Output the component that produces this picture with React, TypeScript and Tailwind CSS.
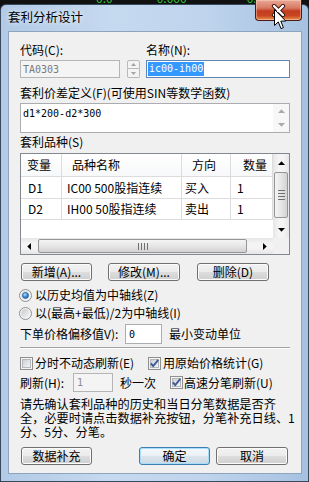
import React from "react";

const cjk = "font-['Noto_Sans_CJK_SC',sans-serif]";
const mono = "font-['DejaVu_Sans_Mono','Noto_Sans_CJK_SC',monospace]";

function Tri({ dir, c = "#000" }: { dir: "u" | "d" | "l" | "r"; c?: string }) {
  if (dir === "u")
    return (
      <svg width="7" height="4" viewBox="0 0 7 4">
        <path d="M0 4L3.5 0.3L7 4Z" fill={c} />
      </svg>
    );
  if (dir === "d")
    return (
      <svg width="7" height="4" viewBox="0 0 7 4">
        <path d="M0 0L3.5 3.7L7 0Z" fill={c} />
      </svg>
    );
  if (dir === "l")
    return (
      <svg width="4" height="7" viewBox="0 0 4 7">
        <path d="M4 0L0.3 3.5L4 7Z" fill={c} />
      </svg>
    );
  return (
    <svg width="4" height="7" viewBox="0 0 4 7">
      <path d="M0 0L3.7 3.5L0 7Z" fill={c} />
    </svg>
  );
}

function Radio({ on }: { on?: boolean }) {
  return (
    <svg width="13" height="13" viewBox="0 0 13 13" className="shrink-0">
      <defs>
        <linearGradient id="rg" x1="0" y1="0" x2="1" y2="1">
          <stop offset="0" stopColor="#c4c8ce" />
          <stop offset="1" stopColor="#f9f9f9" />
        </linearGradient>
        <radialGradient id="rd" cx="0.4" cy="0.35" r="0.75">
          <stop offset="0" stopColor="#b5e3fd" />
          <stop offset="0.55" stopColor="#2f86d6" />
          <stop offset="1" stopColor="#174f8e" />
        </radialGradient>
      </defs>
      <circle cx="6.5" cy="6.5" r="6" fill="#f4f4f4" stroke="#8e8f8f" />
      <circle cx="6.5" cy="6.5" r="4.4" fill="url(#rg)" />
      {on && <circle cx="6.5" cy="6.5" r="3" fill="url(#rd)" stroke="#1d5a95" strokeWidth="0.6" />}
    </svg>
  );
}

function Check({ on }: { on?: boolean }) {
  return (
    <svg width="13" height="13" viewBox="0 0 13 13" className="shrink-0">
      <defs>
        <linearGradient id="cg" x1="0" y1="0" x2="1" y2="1">
          <stop offset="0" stopColor="#c9cdd3" />
          <stop offset="1" stopColor="#f7f7f7" />
        </linearGradient>
      </defs>
      <rect x="0.5" y="0.5" width="12" height="12" fill="#f4f4f4" stroke="#8e8f8f" />
      <rect x="2.5" y="2.5" width="8" height="8" fill="url(#cg)" stroke="#b4b8bd" />
      {on && <path d="M2.8 6.3L5.2 9L10.3 2.8" fill="none" stroke="#3f5a98" strokeWidth="1.9" />}
    </svg>
  );
}

const btnBase =
  "h-[18px] rounded-[3px] border flex items-center justify-center text-[12px] leading-none text-black shrink-0";
const btnGrey =
  "border-[#707070] bg-[linear-gradient(#f2f2f2_0%,#ebebeb_48%,#dddddd_52%,#cfcfcf_100%)] shadow-[inset_0_0_0_1px_#fcfcfc]";
const btnDef =
  "border-[#3c7fb1] bg-[linear-gradient(#f3f8fb_0%,#eaf1f6_48%,#dbe5ec_52%,#cdd9e3_100%)] shadow-[inset_0_0_0_1px_#a8dcf8]";

function VScroll() {
  return (
    <div className="w-[16px] h-[84px] flex flex-col bg-[linear-gradient(90deg,#e6e6e6,#f4f4f4_35%,#f4f4f4_65%,#e6e6e6)]">
      <div className="h-[17px] flex items-center justify-center">
        <Tri dir="u" />
      </div>
      <div className="mt-[1px] h-[46px] mx-[1px] rounded-[2px] border border-[#959595] bg-[linear-gradient(90deg,#f4f4f4,#e6e6e6_50%,#d2d2d2)] flex flex-col items-center justify-center gap-[2px]">
        <div className="w-[7px] h-[1px] bg-[#6f6f6f]" />
        <div className="w-[7px] h-[1px] bg-[#6f6f6f]" />
        <div className="w-[7px] h-[1px] bg-[#6f6f6f]" />
        <div className="w-[7px] h-[1px] bg-[#6f6f6f]" />
      </div>
      <div className="flex-1" />
      <div className="h-[17px] flex items-center justify-center">
        <Tri dir="d" />
      </div>
    </div>
  );
}

function HScroll() {
  return (
    <div className="w-[252px] h-[16px] flex items-center bg-[linear-gradient(#e6e6e6,#f4f4f4_35%,#f4f4f4_65%,#e6e6e6)]">
      <div className="w-[16px] h-full flex items-center justify-center">
        <Tri dir="l" />
      </div>
      <div className="ml-[1px] w-[209px] h-[14px] rounded-[2px] border border-[#959595] bg-[linear-gradient(#f4f4f4,#e6e6e6_50%,#d2d2d2)] flex items-center justify-center gap-[2px]">
        <div className="w-[1px] h-[7px] bg-[#6f6f6f]" />
        <div className="w-[1px] h-[7px] bg-[#6f6f6f]" />
        <div className="w-[1px] h-[7px] bg-[#6f6f6f]" />
        <div className="w-[1px] h-[7px] bg-[#6f6f6f]" />
      </div>
      <div className="flex-1" />
      <div className="w-[17px] h-full flex items-center justify-center">
        <Tri dir="r" />
      </div>
    </div>
  );
}

const cols = ["w-[41px]", "w-[120px]", "w-[49px]", "w-[42px]"];

function Row({ cells, pads, h }: { cells: string[]; pads: string[]; h: string }) {
  return (
    <div className={`flex ${h} border-b border-[#dcdcdc]`}>
      {cells.map((c, i) => (
        <div
          key={i}
          className={`${cols[i]} ${pads[i]} h-full flex items-center border-r border-[#dcdcdc] whitespace-nowrap overflow-hidden`}
        >
          {c}
        </div>
      ))}
    </div>
  );
}

export default function App() {
  return (
    <div className={`w-[309px] h-[482px] bg-[#111111] overflow-hidden relative ${cjk} text-[12px] text-black`}>
      {/* background app peeking above window */}
      <div className="h-[4px] overflow-hidden flex text-[#35c035] text-[12px] leading-[12px]">
        <span className="ml-[96px] -mt-[8px]">0.0</span>
        <span className="ml-[44px] -mt-[8px]">0.000</span>
        <span className="ml-[60px] -mt-[8px]">0.000</span>
      </div>

      {/* window frame */}
      <div className="h-[478px] rounded-t-[6px] border border-[#3a4a5e] bg-[linear-gradient(90deg,#b2cae6_0%,#c5d9ef_35%,#c0d5ed_65%,#a6c1e1_100%)] flex flex-col">
        <div className="h-[26px] flex items-center pl-[7px] pb-[1px]">
          <span className="text-[12.5px] leading-none [text-shadow:0_0_5px_#ffffff]">套利分析设计</span>
        </div>

        {/* client area */}
        <div className="ml-[7px] w-[294px] h-[443px] border border-[#8ea3bc] bg-[#f0f0f0] px-[11px] flex flex-col">
          {/* labels */}
          <div className="mt-[11px] h-[14px] flex leading-[14px]">
            <span className="w-[126px]">代码(C):</span>
            <span>名称(N):</span>
          </div>

          {/* inputs */}
          <div className="mt-[3px] h-[18px] flex">
            <div className={`w-[100px] h-full border border-[#b5b5b5] bg-[#f4f4f4] text-[#7a7a7a] ${mono} text-[10px] flex items-center pl-[2px]`}>
              TA0303
            </div>
            <div className="ml-[7px] w-[13px] h-full flex flex-col gap-[0px]">
              <div className="h-[9px] border border-[#b9b9b9] rounded-t-[2px] bg-[#f3f3f3] flex items-center justify-center">
                <svg width="5" height="3" viewBox="0 0 5 3">
                  <path d="M0 3L2.5 0L5 3Z" fill="#a3a3a3" />
                </svg>
              </div>
              <div className="h-[9px] border border-t-0 border-[#b9b9b9] rounded-b-[2px] bg-[#f3f3f3] flex items-center justify-center">
                <svg width="5" height="3" viewBox="0 0 5 3">
                  <path d="M0 0L2.5 3L5 0Z" fill="#a3a3a3" />
                </svg>
              </div>
            </div>
            <div className="ml-[6px] w-[144px] h-full border border-[#5d86b6] bg-white flex items-center pl-[1px]">
              <span className={`${mono} text-[10px] leading-[14px] bg-[#3399ff] text-white px-[1px]`}>ic00-ih00</span>
            </div>
          </div>

          {/* formula label */}
          <div className="mt-[8px] h-[14px] leading-[14px] whitespace-nowrap">套利价差定义(F)(可使用SIN等数学函数)</div>

          {/* formula textarea */}
          <div className="mt-[3px] h-[30px] border border-[#abadb3] bg-white flex">
            <div className={`flex-1 pl-[2px] pt-[3px] ${mono} text-[10px] leading-[14px]`}>d1*200-d2*300</div>
            <div className="w-[16px] h-full flex flex-col bg-[#f7f7f7]">
              <div className="flex-1 flex items-center justify-center">
                <Tri dir="u" c="#a9a9a9" />
              </div>
              <div className="flex-1 flex items-center justify-center">
                <Tri dir="d" c="#a9a9a9" />
              </div>
            </div>
          </div>

          {/* list label */}
          <div className="mt-[2px] h-[14px] leading-[14px]">套利品种(S)</div>

          {/* list view */}
          <div className="mt-[4px] h-[102px] border border-[#828790] bg-white flex flex-col">
            <div className="flex h-[84px]">
              <div className="w-[252px] flex flex-col">
                <div className="flex h-[23px] border-b border-[#dcdcdc] bg-[linear-gradient(#ffffff,#f7f8f9)]">
                  {["变量", "品种名称", "方向", "数量"].map((c, i) => (
                    <div
                      key={i}
                      className={`${cols[i]} ${["pl-[6px]", "pl-[10px]", "pl-[10px]", "pl-[12px]"][i]} h-full flex items-center border-r border-[#dcdcdc] whitespace-nowrap`}
                    >
                      {c}
                    </div>
                  ))}
                </div>
                <Row
                  h="h-[22px]"
                  cells={["D1", "IC00 500股指连续", "买入", "1"]}
                  pads={["pl-[7px]", "pl-[5px]", "pl-[3px]", "pl-[6px]"]}
                />
                <Row
                  h="h-[21px]"
                  cells={["D2", "IH00 50股指连续", "卖出", "1"]}
                  pads={["pl-[7px]", "pl-[5px]", "pl-[3px]", "pl-[6px]"]}
                />
              </div>
              <VScroll />
            </div>
            <div className="flex h-[16px]">
              <HScroll />
              <div className="w-[16px] h-full bg-[#f0f0f0]" />
            </div>
          </div>

          {/* action buttons */}
          <div className="mt-[8px] h-[18px] flex">
            <div className={`${btnBase} ${btnGrey} ml-[1px] w-[71px]`}>新增(A)...</div>
            <div className={`${btnBase} ${btnGrey} ml-[16px] w-[72px]`}>修改(M)...</div>
            <div className={`${btnBase} ${btnGrey} ml-[17px] w-[72px]`}>删除(D)</div>
          </div>

          {/* radios */}
          <div className="mt-[7px] h-[14px] flex items-center -ml-[1px]">
            <Radio on />
            <span className="ml-[3px] leading-[14px]">以历史均值为中轴线(Z)</span>
          </div>
          <div className="mt-[4px] h-[14px] flex items-center -ml-[1px]">
            <Radio />
            <span className="ml-[3px] leading-[14px]">以(最高+最低)/2为中轴线(I)</span>
          </div>

          {/* offset row */}
          <div className="mt-[4px] h-[20px] flex items-center">
            <span className="w-[105px] whitespace-nowrap">下单价格偏移值V):</span>
            <div className={`w-[37px] h-[20px] border border-[#abadb3] bg-white flex items-center pl-[3px] ${mono} text-[10px]`}>
              0
            </div>
            <span className="ml-[7px]">最小变动单位</span>
          </div>

          {/* separator */}
          <div className="mt-[3px] h-[2px] border-t border-[#a0a0a0] border-b border-b-white" />

          {/* checkbox row */}
          <div className="mt-[7px] h-[14px] flex items-center">
            <div className="w-[128px] flex items-center">
              <Check />
              <span className="ml-[2px] leading-[14px] whitespace-nowrap">分时不动态刷新(E)</span>
            </div>
            <Check on />
            <span className="ml-[2px] leading-[14px] whitespace-nowrap">用原始价格统计(G)</span>
          </div>

          {/* refresh row */}
          <div className="mt-[3px] h-[19px] flex items-center">
            <span className="w-[53px] whitespace-nowrap">刷新(H):</span>
            <div className={`w-[40px] h-[19px] border border-[#b5b5b5] bg-[#f4f4f4] text-[#8a8a8a] flex items-start pl-[3px] pt-[1px] ${mono} text-[10px]`}>
              1
            </div>
            <span className="ml-[7px] w-[36px] whitespace-nowrap">秒一次</span>
            <div className="ml-[14px] flex items-center">
              <Check on />
              <span className="ml-[1px] leading-[14px] whitespace-nowrap">高速分笔刷新(U)</span>
            </div>
          </div>

          {/* note */}
          <div className="mt-[5px] flex flex-col text-[12.2px] whitespace-nowrap">
            <div className="h-[14px] leading-[14px]">请先确认套利品种的历史和当日分笔数据是否齐</div>
            <div className="h-[14px] leading-[14px]">全，必要时请点击数据补充按钮，分笔补充日线、1</div>
            <div className="h-[14px] leading-[14px]">分、5分、分笔。</div>
          </div>

          {/* bottom buttons */}
          <div className="mt-[8px] h-[18px] flex">
            <div className={`${btnBase} ${btnGrey} ml-[1px] w-[71px] text-[12.5px]`}>数据补充</div>
            <div className={`${btnBase} ${btnDef} ml-[47px] w-[71px] text-[12.5px]`}>确定</div>
            <div className={`${btnBase} ${btnGrey} ml-[6px] w-[72px] text-[12.5px]`}>取消</div>
          </div>
        </div>
      </div>

      {/* close button (overlays top edge) */}
      <div className="absolute top-0 left-[255px] w-[47px] h-[21px] rounded-b-[4px] border border-t-0 border-[#4d1a11] bg-[linear-gradient(#e9a896_0%,#d77a62_40%,#c23c1f_55%,#c84620_78%,#e98f50_100%)] shadow-[inset_0_0_0_1px_rgba(255,220,200,0.45)] flex items-center justify-center">
        <svg width="15" height="13" viewBox="0 0 15 13">
          <path d="M3 2L12 11M12 2L3 11" stroke="#3b1209" strokeWidth="4.2" strokeLinecap="round" />
          <path d="M3 2L12 11M12 2L3 11" stroke="#ffffff" strokeWidth="2.4" strokeLinecap="round" />
        </svg>
      </div>

      {/* mouse cursor */}
      <svg className="absolute left-[274px] top-[9px]" width="13" height="21" viewBox="0 0 13 21">
        <path
          d="M0.5 0.5V16.5L4.3 12.9L7 19.6L9.4 18.6L6.8 12.1H11.8Z"
          fill="#ffffff"
          stroke="#000000"
          strokeWidth="1"
          strokeLinejoin="round"
        />
      </svg>
    </div>
  );
}
